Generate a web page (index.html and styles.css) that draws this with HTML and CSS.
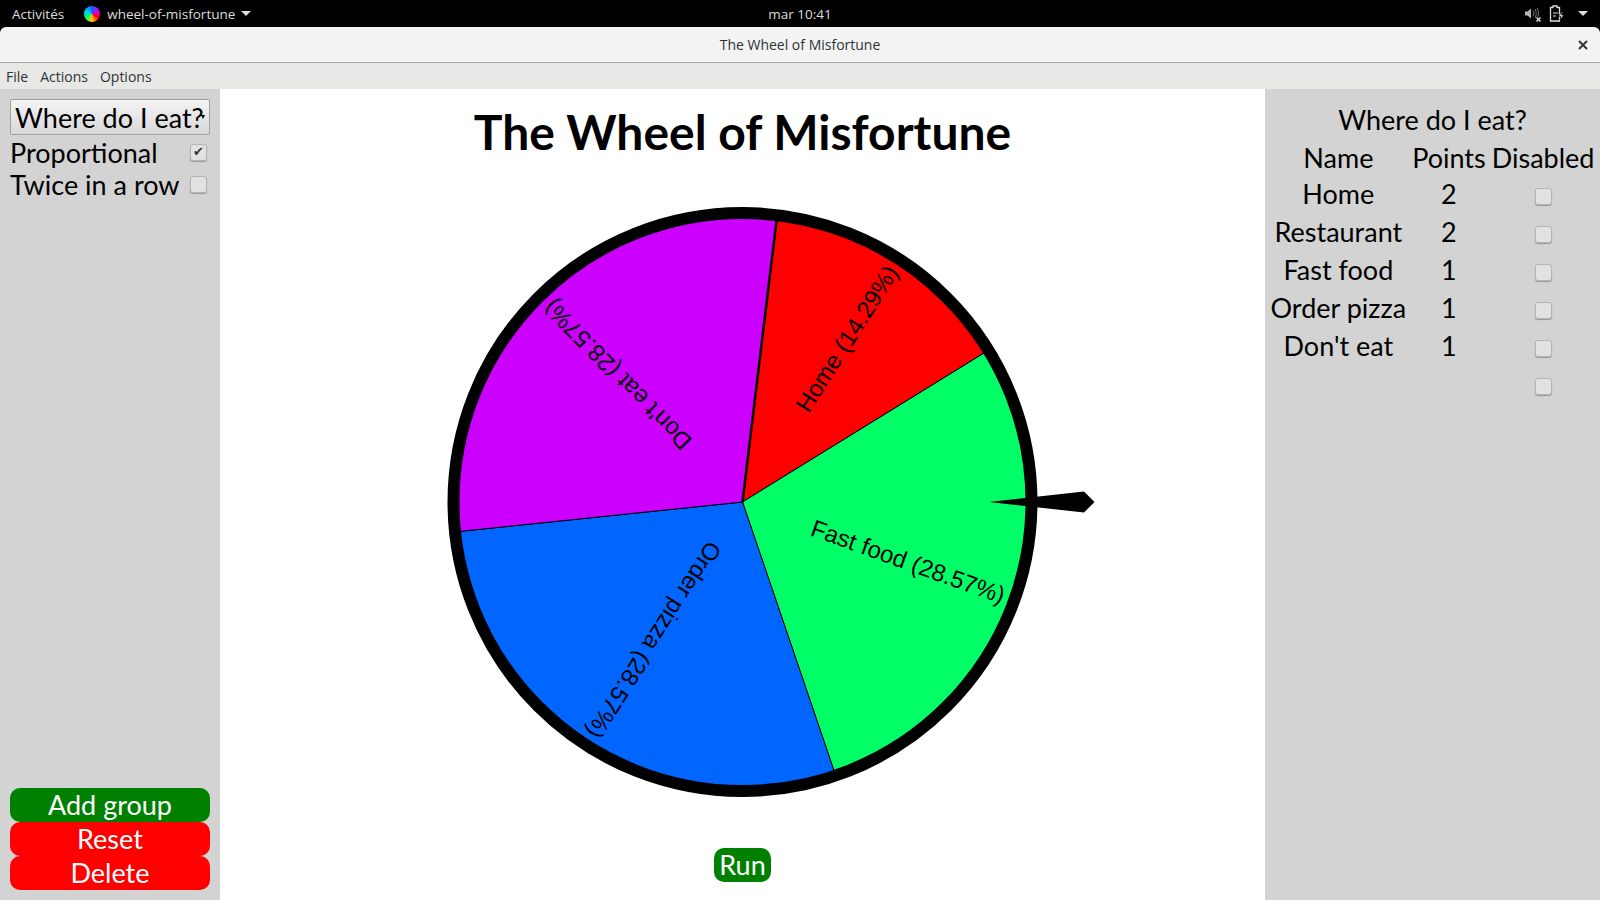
FILE: index.html
```html
<!DOCTYPE html>
<html lang="en">
<head>
    <meta charset="UTF-8">
    <meta name="viewport" content="width=device-width, initial-scale=1.0">
    <title>The Wheel of Misfortune</title>
    <link rel="stylesheet" href="styles.css">
</head>
<body>
    <!-- Desktop top bar -->
    <div class="topbar">
        <div class="topbar-left">
            <span>Activités</span>
            <span class="app-name"><span class="app-icon"></span>wheel-of-misfortune<span class="caret"></span></span>
        </div>
        <div class="clock">mar 10:41</div>
        <div class="topbar-right">
            <svg class="tray-icon" width="18" height="18" viewBox="0 0 18 18">
                <path d="M1 6.5h2.5L7 3.5v10L3.5 10.5H1z" fill="#b5b5b5"/>
                <path d="M9 5.5c1 1.8 1 4.2 0 6M11 4c1.6 2.8 1.6 6.200 0 9M13 3c1.800 3 1.800 6.500 .8 9" fill="none" stroke="#777" stroke-width="1"/>
                <path d="M12.500 12.500l4 4M16.500 12.500l-4 4" stroke="#ddd" stroke-width="1.500"/>
            </svg>
            <svg class="tray-icon" width="18" height="18" viewBox="0 0 18 18">
                <path d="M5 1h4v1.500h2.500V16H2.500V2.500H5z" fill="none" stroke="#ddd" stroke-width="1.300"/>
                <path d="M5 8h5M5 11h3" stroke="#ddd" stroke-width="1.200"/>
                <path d="M13.500 7l-3 4.500h2.500l-1 3.500 4-5h-2.500l1-3z" fill="#ddd" stroke="#000" stroke-width=".6"/>
            </svg>
            <span class="caret"></span>
        </div>
    </div>

    <!-- Window frame -->
    <div class="titlebar">
        <span>The Wheel of Misfortune</span>
        <svg class="close-icon" width="10" height="10" viewBox="0 0 10 10">
            <path d="M1 1l8 8M9 1l-8 8" stroke="#2e3436" stroke-width="2"/>
        </svg>
    </div>
    <nav class="menubar">
        <span>File</span>
        <span>Actions</span>
        <span>Options</span>
    </nav>

    <div class="app">
        <aside class="sidebar">
            <div class="group-options">
                <div class="group-select">
                    <select>
                        <option>Where do I eat?</option>
                    </select>
                </div>
                <label class="option"><span>Proportional</span><input type="checkbox" checked></label>
                <label class="option"><span>Twice in a row</span><input type="checkbox"></label>
            </div>
            <div class="group-actions">
                <button class="btn btn-green">Add group</button>
                <button class="btn btn-red">Reset</button>
                <button class="btn btn-red">Delete</button>
            </div>
        </aside>

        <main class="stage">
            <h1>The Wheel of Misfortune</h1>
            <svg class="wheel" width="721" height="610" viewBox="0 0 721 610">
                <g transform="translate(360.500 305)">
                    <path class="slice" fill="#ff0000" d="M0 0L34.200 -282.900A285 285 0 0 1 242.600 -149.600Z"/>
                    <path class="slice" fill="#00ff66" d="M0 0L242.600 -149.600A285 285 0 0 1 91.900 269.800Z"/>
                    <path class="slice" fill="#0066ff" d="M0 0L91.900 269.800A285 285 0 0 1 -283.500 29.500Z"/>
                    <path class="slice" fill="#cc00ff" d="M0 0L-283.500 29.500A285 285 0 0 1 34.200 -282.900Z"/>
                    <line class="spoke" x1="0" y1="0" x2="34.200" y2="-282.900"/>
                    <text class="slice-label" transform="rotate(-57.400)" x="278" dy=".35em">Home (14.29%)</text>
                    <text class="slice-label" transform="rotate(19.760)" x="278" dy=".35em">Fast food (28.57%)</text>
                    <text class="slice-label" transform="rotate(122.620)" x="278" dy=".35em">Order pizza (28.57%)</text>
                    <text class="slice-label" transform="rotate(225.480)" x="278" dy=".35em">Don't eat (28.57%)</text>
                    <circle class="rim" r="289"/>
                    <path class="pointer" d="M246.500 0L341.500 -10.500L352 0L341.500 10.500Z"/>
                </g>
            </svg>
            <button class="btn btn-green btn-run">Run</button>
        </main>

        <aside class="sidebar-right">
            <h2>Where do I eat?</h2>
            <table class="entries">
                <tr><th>Name</th><th>Points</th><th>Disabled</th></tr>
                <tr><td>Home</td><td>2</td><td><input type="checkbox"></td></tr>
                <tr><td>Restaurant</td><td>2</td><td><input type="checkbox"></td></tr>
                <tr><td>Fast food</td><td>1</td><td><input type="checkbox"></td></tr>
                <tr><td>Order pizza</td><td>1</td><td><input type="checkbox"></td></tr>
                <tr><td>Don't eat</td><td>1</td><td><input type="checkbox"></td></tr>
                <tr><td></td><td></td><td><input type="checkbox"></td></tr>
            </table>
        </aside>
    </div>
</body>
</html>
```

FILE: styles.css
```css
/* General Styling */
html, body {
    height: 100%;
    margin: 0;
    overflow: hidden;
}

body {
    display: flex;
    flex-direction: column;
    background-color: #000;
    font-family: "Open Sans", sans-serif;
}

/* Desktop top bar */
.topbar {
    display: grid;
    grid-template-columns: 1fr auto 1fr;
    align-items: center;
    height: 27px;
    padding: 0 12px;
    color: #ddd;
    font-size: 13.500px;
}

.topbar-left {
    display: flex;
    align-items: center;
    gap: 20px;
}

.app-name {
    display: flex;
    align-items: center;
}

.app-icon {
    width: 16px;
    height: 16px;
    margin-right: 7px;
    border-radius: 50%;
    background: conic-gradient(#0066ff, #cc00ff, #ff0000, #ffcc00, #00ff66, #00ccff, #0066ff);
}

.caret {
    width: 0;
    height: 0;
    margin-left: 6px;
    border-left: 5px solid transparent;
    border-right: 5px solid transparent;
    border-top: 5px solid #ddd;
}

.clock {
    text-align: center;
}

.topbar-right {
    display: flex;
    align-items: center;
    justify-content: flex-end;
    gap: 6px;
}

/* Window frame */
.titlebar {
    position: relative;
    display: flex;
    align-items: center;
    justify-content: center;
    flex: none;
    height: 36px;
    box-sizing: border-box;
    border-bottom: 1px solid #a8a8a0;
    border-radius: 6px 6px 0 0;
    background-color: #f3f3f3;
    color: #2e3436;
    font-size: 14px;
}

.close-icon {
    position: absolute;
    right: 12px;
    top: 13px;
}

.menubar {
    display: flex;
    align-items: center;
    flex: none;
    gap: 12px;
    height: 26px;
    padding: 0 6px;
    background-color: #e8e8e7;
    color: #2e3436;
    font-size: 14px;
}

/* App layout */
.app {
    display: grid;
    grid-template-columns: 220px 1fr 335px;
    flex: 1;
    min-height: 0;
    font-family: Lato, sans-serif;
    color: #000;
}

.sidebar {
    display: flex;
    flex-direction: column;
    justify-content: space-between;
    padding: 10px;
    background-color: #d3d3d3;
}

.group-select {
    position: relative;
    margin-bottom: 1px;
}

.group-select select {
    width: 100%;
    height: 36px;
    padding: 0 4px;
    appearance: none;
    border: 1px solid #a0a0a0;
    border-radius: 2px;
    background: linear-gradient(#f4f4f4, #d8d8d8);
    color: #000;
    font-family: inherit;
    font-size: 27px;
}

.group-select::after {
    content: "";
    position: absolute;
    right: 5px;
    top: 16px;
    border-left: 2.500px solid transparent;
    border-right: 2.500px solid transparent;
    border-top: 4px solid #000;
}

.option {
    display: flex;
    align-items: center;
    justify-content: space-between;
    height: 32px;
    padding-right: 3px;
    font-size: 27px;
}

input[type="checkbox"] {
    position: relative;
    width: 17px;
    height: 17px;
    margin: 0;
    appearance: none;
    box-sizing: border-box;
    border: 1px solid #b4b4b4;
    border-radius: 3px;
    background-color: #e2e2e2;
    box-shadow: 0 1px 1px #9a9a9a;
    vertical-align: middle;
}

input[type="checkbox"]:checked::after {
    content: "\2714";
    position: absolute;
    left: 2px;
    top: -1px;
    color: #333;
    font-family: "DejaVu Sans", sans-serif;
    font-size: 13px;
}

/* Buttons */
.btn {
    display: block;
    width: 100%;
    height: 34px;
    padding: 0;
    border: none;
    border-radius: 10px;
    color: #fff;
    font-family: inherit;
    font-size: 27px;
    line-height: 34px;
}

.btn-green {
    background-color: #008000;
}

.btn-red {
    background-color: #ff0000;
}

/* Wheel */
.stage {
    display: flex;
    flex-direction: column;
    align-items: center;
    min-width: 0;
    background-color: #fff;
}

.stage h1 {
    height: 108px;
    margin: 0;
    padding-top: 14px;
    box-sizing: border-box;
    font-size: 48px;
    font-weight: 700;
}

.wheel {
    flex: none;
}

.slice {
    stroke: #000;
    stroke-width: 1;
}

.spoke {
    stroke: #000;
    stroke-width: 2.500;
}

.rim {
    fill: none;
    stroke: #000;
    stroke-width: 12;
}

.pointer {
    fill: #000;
}

.slice-label {
    fill: #000;
    font-family: "Liberation Sans", sans-serif;
    font-size: 24px;
    text-anchor: end;
}

.btn-run {
    width: 57px;
    margin-top: 41px;
}

/* Right panel */
.sidebar-right {
    padding-top: 10px;
    background-color: #d3d3d3;
    text-align: center;
}

.sidebar-right h2 {
    margin: 0;
    font-size: 27px;
    font-weight: 400;
    line-height: 42px;
}

.entries {
    margin: 0 auto;
    border-collapse: collapse;
    font-size: 27px;
}

.entries th {
    padding: 0 3px;
    height: 32px;
    font-weight: 400;
}

.entries td {
    padding: 0 3px;
    height: 38px;
}
```
